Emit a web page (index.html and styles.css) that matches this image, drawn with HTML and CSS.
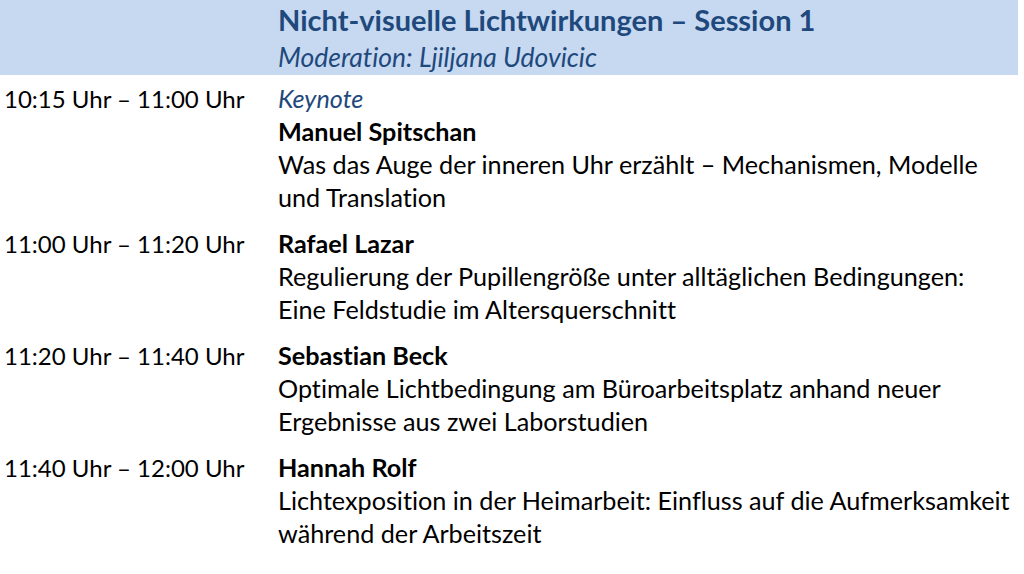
FILE: index.html
```html
<!DOCTYPE html>
<html lang="de">
<head>
<meta charset="utf-8">
<title>Nicht-visuelle Lichtwirkungen – Session 1</title>
<link rel="stylesheet" href="styles.css">
</head>
<body>
<div class="page">
  <div class="header">
    <div class="time"></div>
    <div class="content">
      <div class="title">Nicht-visuelle Lichtwirkungen – Session 1</div>
      <div class="moderation">Moderation: Ljiljana Udovicic</div>
    </div>
  </div>
  <div class="row">
    <div class="time">10:15 Uhr – 11:00 Uhr</div>
    <div class="content">
      <div class="tag">Keynote</div>
      <div class="speaker">Manuel Spitschan</div>
      <div class="talk">Was das Auge der inneren Uhr erzählt – Mechanismen, Modelle und Translation</div>
    </div>
  </div>
  <div class="row">
    <div class="time">11:00 Uhr – 11:20 Uhr</div>
    <div class="content">
      <div class="speaker">Rafael Lazar</div>
      <div class="talk">Regulierung der Pupillengröße unter alltäglichen Bedingungen: Eine Feldstudie im Altersquerschnitt</div>
    </div>
  </div>
  <div class="row">
    <div class="time">11:20 Uhr – 11:40 Uhr</div>
    <div class="content">
      <div class="speaker">Sebastian Beck</div>
      <div class="talk">Optimale Lichtbedingung am Büroarbeitsplatz anhand neuer Ergebnisse aus zwei Laborstudien</div>
    </div>
  </div>
  <div class="row">
    <div class="time">11:40 Uhr – 12:00 Uhr</div>
    <div class="content">
      <div class="speaker">Hannah Rolf</div>
      <div class="talk">Lichtexposition in der Heimarbeit: Einfluss auf die Aufmerksamkeit während der Arbeitszeit</div>
    </div>
  </div>
</div>
</body>
</html>
```
FILE: styles.css
```css
html, body {
  margin: 0;
  padding: 0;
  background: #ffffff;
}
body {
  font-family: Lato, "Open Sans", sans-serif;
  font-size: 25.2px;
  color: #000000;
  font-variant-ligatures: none;
}
.page {
  width: 1018px;
}
.header {
  display: flex;
  background: #c6d9f0;
  height: 75px;
  box-sizing: border-box;
  padding-top: 3px;
}
.time {
  width: 278px;
  flex: none;
  box-sizing: border-box;
  padding-left: 4px;
  line-height: 33px;
  font-size: 24px;
}
.content {
  flex: 1;
  line-height: 33px;
  padding-right: 2px;
}
.title {
  font-size: 29px;
  font-weight: bold;
  color: #1f497d;
  line-height: 34px;
}
.moderation {
  font-style: italic;
  color: #1f497d;
  font-size: 26.5px;
  line-height: 40px;
}
.row {
  display: flex;
  padding-top: 7px;
  padding-bottom: 6px;
}
.tag {
  font-style: italic;
  color: #1f497d;
}
.speaker {
  font-weight: bold;
}
```
